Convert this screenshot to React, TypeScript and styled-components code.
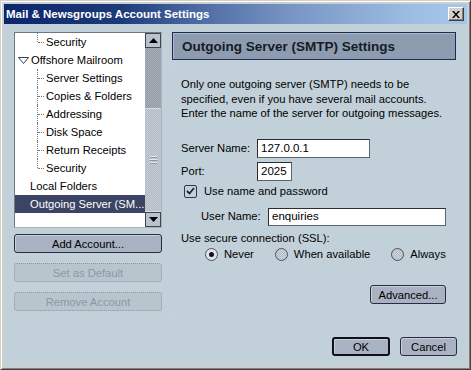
import styled, { createGlobalStyle } from "styled-components";

const GlobalStyle = createGlobalStyle`
  html, body {
    margin: 0;
    padding: 0;
    background: #ffffff;
  }
  body {
    font-family: "Liberation Sans", Arial, sans-serif;
    font-size: 11px;
    color: #000000;
  }
`;

const Window = styled.div`
  box-sizing: border-box;
  width: 471px;
  height: 370px;
  display: flex;
  flex-direction: column;
  background: #c2d1d9;
  border: 1px solid;
  border-color: #d4d0c8 #404040 #404040 #d4d0c8;
  box-shadow: inset 1px 1px 0 #ffffff, inset -1px -1px 0 #808080,
    inset 2px 2px 0 #d4d0c8, inset -2px -2px 0 #d4d0c8;
  padding: 3px;
`;

const TitleBar = styled.div`
  height: 20px;
  display: flex;
  align-items: center;
  justify-content: space-between;
  padding: 0 3px 0 2px;
  background: linear-gradient(
    90deg,
    #0c266c 0%,
    #1c3a78 25%,
    #4d6ba3 42%,
    #7895c4 62%,
    #9dbde3 88%,
    #a8c6ea 100%
  );
`;

const TitleText = styled.span`
  color: #ffffff;
  font-weight: bold;
  font-size: 11.5px;
  white-space: nowrap;
`;

const CloseButton = styled.div`
  box-sizing: border-box;
  width: 16px;
  height: 14px;
  display: flex;
  align-items: center;
  justify-content: center;
  background: #d4d0c8;
  border: 1px solid;
  border-color: #ffffff #404040 #404040 #ffffff;
  box-shadow: inset -1px -1px 0 #808080;
`;

const Body = styled.div`
  flex: 1;
  display: flex;
  flex-direction: column;
  padding: 8px 10px 0 10px;
`;

const Columns = styled.div`
  display: grid;
  grid-template-columns: 148px 284px;
  column-gap: 10px;
`;

const LeftColumn = styled.div`
  display: flex;
  flex-direction: column;
`;

const Tree = styled.div`
  box-sizing: border-box;
  height: 196px;
  display: flex;
  background: #ffffff;
  border: 1px solid;
  border-color: #6c7884 #a8b4bc #a8b4bc #6c7884;
`;

const TreeList = styled.div`
  flex: 1;
  min-width: 0;
  display: flex;
  flex-direction: column;
`;

const TreeRow = styled.div<{ $indent: number; $selected?: boolean }>`
  position: relative;
  height: 18px;
  display: flex;
  align-items: center;
  padding-left: ${(p) => p.$indent}px;
  background: ${(p) => (p.$selected ? "#3b4462" : "transparent")};
  color: ${(p) => (p.$selected ? "#ffffff" : "#000000")};
  font-size: 11.2px;
  white-space: nowrap;
  overflow: hidden;
`;

const Guide = styled.span<{ $last?: boolean }>`
  position: absolute;
  left: 22px;
  top: 0;
  width: 6px;
  height: ${(p) => (p.$last ? "9px" : "18px")};
  border-left: 1px dotted #7a7a7a;
  &::after {
    content: "";
    position: absolute;
    left: 0;
    top: 9px;
    width: 6px;
    border-top: 1px dotted #7a7a7a;
  }
`;

const Twisty = styled.svg`
  margin-right: 2px;
`;

const ScrollBar = styled.div`
  width: 16px;
  flex-shrink: 0;
  display: flex;
  flex-direction: column;
  background: repeating-conic-gradient(#8f99a3 0% 25%, #aab3bb 0% 50%) 0 0 / 2px 2px;
`;

const ScrollArrow = styled.div`
  box-sizing: border-box;
  height: 15px;
  display: flex;
  align-items: center;
  justify-content: center;
  background: #b9c3cb;
  border: 1px solid #3c4450;
`;

const ScrollTrack = styled.div`
  flex: 1;
  display: flex;
  flex-direction: column;
  justify-content: flex-end;
`;

const ScrollThumb = styled.div`
  box-sizing: border-box;
  height: 104px;
  display: flex;
  align-items: center;
  justify-content: center;
  background: repeating-conic-gradient(#b3bcc5 0% 25%, #c3ccd4 0% 50%) 0 0 / 2px 2px;
  border-top: 1px solid #d8dee4;
  border-bottom: 1px solid #d8dee4;
`;

const Grip = styled.div`
  width: 7px;
  height: 9px;
  background: repeating-linear-gradient(
    180deg,
    #e6ebf0 0 1px,
    #8e98a2 1px 2px,
    transparent 2px 3px
  );
`;

const Button = styled.div<{ $disabled?: boolean; $default?: boolean; $width?: number }>`
  box-sizing: border-box;
  height: 19px;
  width: ${(p) => (p.$width ? `${p.$width}px` : "auto")};
  display: flex;
  align-items: center;
  justify-content: center;
  border-radius: 3px;
  font-size: 11.2px;
  white-space: nowrap;
  background: ${(p) => (p.$disabled ? "#b9c5cd" : "#a9b2c2")};
  color: ${(p) => (p.$disabled ? "#8c98a6" : "#000000")};
  border: ${(p) =>
    p.$disabled
      ? "1px dotted #8a96a4"
      : p.$default
      ? "2px solid #101018"
      : "1px solid #282c3c"};
  box-shadow: ${(p) => (p.$disabled ? "none" : "inset 1px 1px 0 #c8d0dc")};
`;

const SideButton = styled(Button)`
  margin-top: ${(p) => (p.$disabled ? "10px" : "6px")};
`;

const RightColumn = styled.div`
  display: flex;
  flex-direction: column;
  gap: 11px;
`;

const Header = styled.div`
  box-sizing: border-box;
  height: 28px;
  display: flex;
  align-items: center;
  padding-left: 9px;
  background: #8d9daf;
  border: 1px solid #1e2a58;
  box-shadow: inset 1px 1px 0 #a9b7c6;
  color: #161a28;
  font-size: 13.5px;
  font-weight: bold;
  white-space: nowrap;
`;

const Panel = styled.div`
  box-sizing: border-box;
  height: 242px;
  display: flex;
  flex-direction: column;
  padding: 5px 9px 0 8px;
  border: 1px dotted #f4f7f9;
  outline: 1px solid rgba(150, 165, 175, 0.35);
  outline-offset: -1px;
`;

const Intro = styled.p`
  margin: 0;
  font-size: 11.2px;
  line-height: 14.5px;
  white-space: nowrap;
`;

const Row = styled.div<{ $mt: number; $indent?: number }>`
  display: flex;
  align-items: center;
  min-height: 13px;
  margin-top: ${(p) => p.$mt}px;
  padding-left: ${(p) => p.$indent ?? 0}px;
  font-size: 11.2px;
  line-height: 13px;
  white-space: nowrap;
`;

const Label = styled.span<{ $width: number }>`
  width: ${(p) => p.$width}px;
  flex-shrink: 0;
`;

const Input = styled.div<{ $width: number; $height?: number }>`
  box-sizing: border-box;
  width: ${(p) => p.$width}px;
  height: ${(p) => p.$height ?? 19}px;
  display: flex;
  align-items: center;
  padding-left: 3px;
  background: #ffffff;
  border: 1px solid;
  border-color: #2c2c34 #5c646c #5c646c #2c2c34;
  font-size: 11.5px;
`;

const CheckBox = styled.span`
  box-sizing: border-box;
  width: 13px;
  height: 13px;
  margin: 0 7px 0 3px;
  display: flex;
  align-items: center;
  justify-content: center;
  background: #c5cfdb;
  border: 1px solid #34384a;
  border-radius: 2px;
`;

const RadioGroup = styled.div`
  display: flex;
  align-items: center;
  gap: 21px;
  padding-left: 24px;
`;

const RadioItem = styled.label`
  display: flex;
  align-items: center;
  gap: 6px;
`;

const Radio = styled.span<{ $checked?: boolean }>`
  box-sizing: border-box;
  width: 13px;
  height: 13px;
  border-radius: 50%;
  display: flex;
  align-items: center;
  justify-content: center;
  border: 1px solid #4c5460;
  background: ${(p) =>
    p.$checked
      ? "#dfe4ea"
      : "repeating-conic-gradient(#aeb7bf 0% 25%, #d2d8de 0% 50%) 0 0 / 2px 2px"};
  &::after {
    content: "";
    display: ${(p) => (p.$checked ? "block" : "none")};
    width: 5px;
    height: 5px;
    border-radius: 50%;
    background: #141418;
  }
`;

const PanelFooter = styled.div`
  margin-top: auto;
  margin-bottom: 8px;
  display: flex;
  justify-content: flex-end;
`;

const DialogFooter = styled.div`
  display: flex;
  justify-content: flex-end;
  gap: 10px;
  margin-top: 24px;
`;

const treeItems = [
  { label: "Security", indent: 31, guide: "last" },
  { label: "Offshore Mailroom", indent: 3, twisty: true },
  { label: "Server Settings", indent: 31, guide: "mid" },
  { label: "Copies & Folders", indent: 31, guide: "mid" },
  { label: "Addressing", indent: 31, guide: "mid" },
  { label: "Disk Space", indent: 31, guide: "mid" },
  { label: "Return Receipts", indent: 31, guide: "mid" },
  { label: "Security", indent: 31, guide: "last" },
  { label: "Local Folders", indent: 15 },
  { label: "Outgoing Server (SM...", indent: 15, selected: true },
];

export default function App() {
  return (
    <>
      <GlobalStyle />
      <Window>
        <TitleBar>
          <TitleText>Mail &amp; Newsgroups Account Settings</TitleText>
          <CloseButton>
            <svg width="8" height="7" viewBox="0 0 8 7">
              <path d="M0 0h2l2 2.5L6 0h2L5 3.5 8 7H6L4 4.5 2 7H0l3-3.5z" fill="#000" />
            </svg>
          </CloseButton>
        </TitleBar>

        <Body>
          <Columns>
            <LeftColumn>
              <Tree>
                <TreeList>
                  {treeItems.map((item, i) => (
                    <TreeRow key={i} $indent={item.indent} $selected={item.selected}>
                      {item.guide && <Guide $last={item.guide === "last"} />}
                      {item.twisty && (
                        <Twisty width="11" height="7" viewBox="0 0 11 7">
                          <path d="M0.5 0.5h10L5.5 6.5z" fill="#ffffff" stroke="#3a4250" />
                        </Twisty>
                      )}
                      {item.label}
                    </TreeRow>
                  ))}
                </TreeList>
                <ScrollBar>
                  <ScrollArrow>
                    <svg width="9" height="5" viewBox="0 0 9 5">
                      <path d="M4.5 0L9 5H0z" fill="#000" />
                    </svg>
                  </ScrollArrow>
                  <ScrollTrack>
                    <ScrollThumb>
                      <Grip />
                    </ScrollThumb>
                  </ScrollTrack>
                  <ScrollArrow>
                    <svg width="9" height="5" viewBox="0 0 9 5">
                      <path d="M0 0h9L4.5 5z" fill="#000" />
                    </svg>
                  </ScrollArrow>
                </ScrollBar>
              </Tree>
              <SideButton>Add Account...</SideButton>
              <SideButton $disabled>Set as Default</SideButton>
              <SideButton $disabled>Remove Account</SideButton>
            </LeftColumn>

            <RightColumn>
              <Header>Outgoing Server (SMTP) Settings</Header>
              <Panel>
                <Intro>
                  Only one outgoing server (SMTP) needs to be
                  <br />
                  specified, even if you have several mail accounts.
                  <br />
                  Enter the name of the server for outgoing messages.
                </Intro>
                <Row $mt={18}>
                  <Label $width={76}>Server Name:</Label>
                  <Input $width={113}>127.0.0.1</Input>
                </Row>
                <Row $mt={4}>
                  <Label $width={76}>Port:</Label>
                  <Input $width={35}>2025</Input>
                </Row>
                <Row $mt={4}>
                  <CheckBox>
                    <svg width="9" height="8" viewBox="0 0 9 8">
                      <path d="M1 4l2.5 2.5L8 1" fill="none" stroke="#20243a" strokeWidth="1.8" />
                    </svg>
                  </CheckBox>
                  Use name and password
                </Row>
                <Row $mt={10} $indent={20}>
                  <Label $width={67}>User Name:</Label>
                  <Input $width={178} $height={18}>enquiries</Input>
                </Row>
                <Row $mt={6}>Use secure connection (SSL):</Row>
                <Row $mt={3}>
                  <RadioGroup>
                    <RadioItem>
                      <Radio $checked />
                      Never
                    </RadioItem>
                    <RadioItem>
                      <Radio />
                      When available
                    </RadioItem>
                    <RadioItem>
                      <Radio />
                      Always
                    </RadioItem>
                  </RadioGroup>
                </Row>
                <PanelFooter>
                  <Button $width={76}>Advanced...</Button>
                </PanelFooter>
              </Panel>
            </RightColumn>
          </Columns>

          <DialogFooter>
            <Button $default $width={58}>OK</Button>
            <Button $width={57}>Cancel</Button>
          </DialogFooter>
        </Body>
      </Window>
    </>
  );
}
